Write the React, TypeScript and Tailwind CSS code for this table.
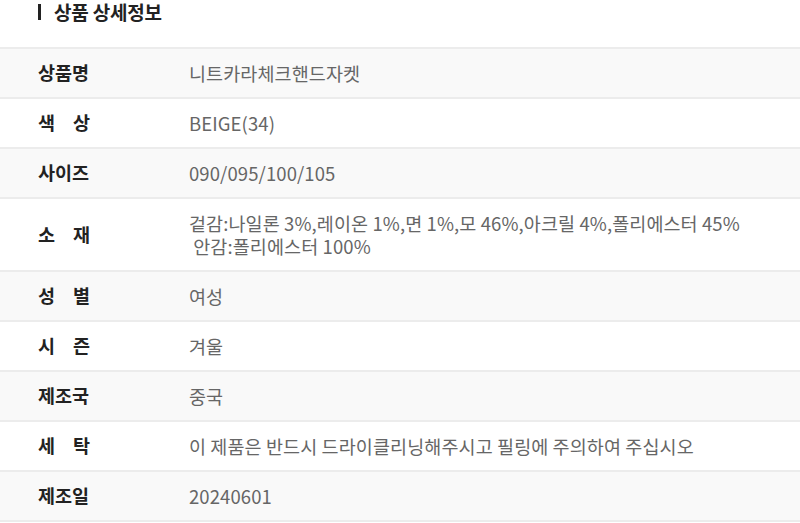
import React from 'react';

type Row = { label: string; spaced?: boolean; value: React.ReactNode };

const rows: Row[] = [
  { label: '상품명', value: '니트카라체크핸드자켓' },
  { label: '색상', spaced: true, value: 'BEIGE(34)' },
  { label: '사이즈', value: '090/095/100/105' },
  {
    label: '소재',
    spaced: true,
    value: (
      <>
        겉감:나일론 3%,레이온 1%,면 1%,모 46%,아크릴 4%,폴리에스터 45%
        <br />
        &nbsp;안감:폴리에스터 100%
      </>
    ),
  },
  { label: '성별', spaced: true, value: '여성' },
  { label: '시즌', spaced: true, value: '겨울' },
  { label: '제조국', value: '중국' },
  { label: '세탁', spaced: true, value: '이 제품은 반드시 드라이클리닝해주시고 필링에 주의하여 주십시오' },
  { label: '제조일', value: '20240601' },
];

export default function App() {
  return (
    <div
      className="w-[800px] h-[523px] bg-white overflow-hidden"
      style={{ fontFamily: '"Noto Sans CJK KR", "Noto Sans", sans-serif' }}
    >
      {/* Title */}
      <div className="h-[47px] pt-[1px] pl-[38px]">
        <div className="flex items-center h-[22px] gap-[13px]">
          <span className="w-[3px] h-[16px] bg-[#222]" />
          <h2 className="text-[19px] leading-[22px] font-bold text-[#222] tracking-[-0.2px]">상품 상세정보</h2>
        </div>
      </div>

      {/* Table */}
      <div className="border-t-2 border-[#ececec]">
        {rows.map((row, idx) => (
          <div
            key={row.label}
            className={`flex items-center border-b-2 border-[#ececec] ${
              idx % 2 === 0 ? 'bg-[#f9f9f9]' : 'bg-white'
            } ${row.label === '소재' ? 'h-[73px]' : 'h-[50px]'}`}
          >
            <div className="w-[189px] shrink-0 pl-[38px]">
              {row.spaced ? (
                <div className="w-[52px] flex justify-between text-[18.5px] font-bold text-[#222]">
                  {row.label.split('').map((c) => (
                    <span key={c}>{c}</span>
                  ))}
                </div>
              ) : (
                <span className="text-[18.5px] font-bold text-[#222]">{row.label}</span>
              )}
            </div>
            <div className="text-[18.5px] leading-[23px] text-[#666] tracking-[0.1px]">{row.value}</div>
          </div>
        ))}
      </div>
    </div>
  );
}
